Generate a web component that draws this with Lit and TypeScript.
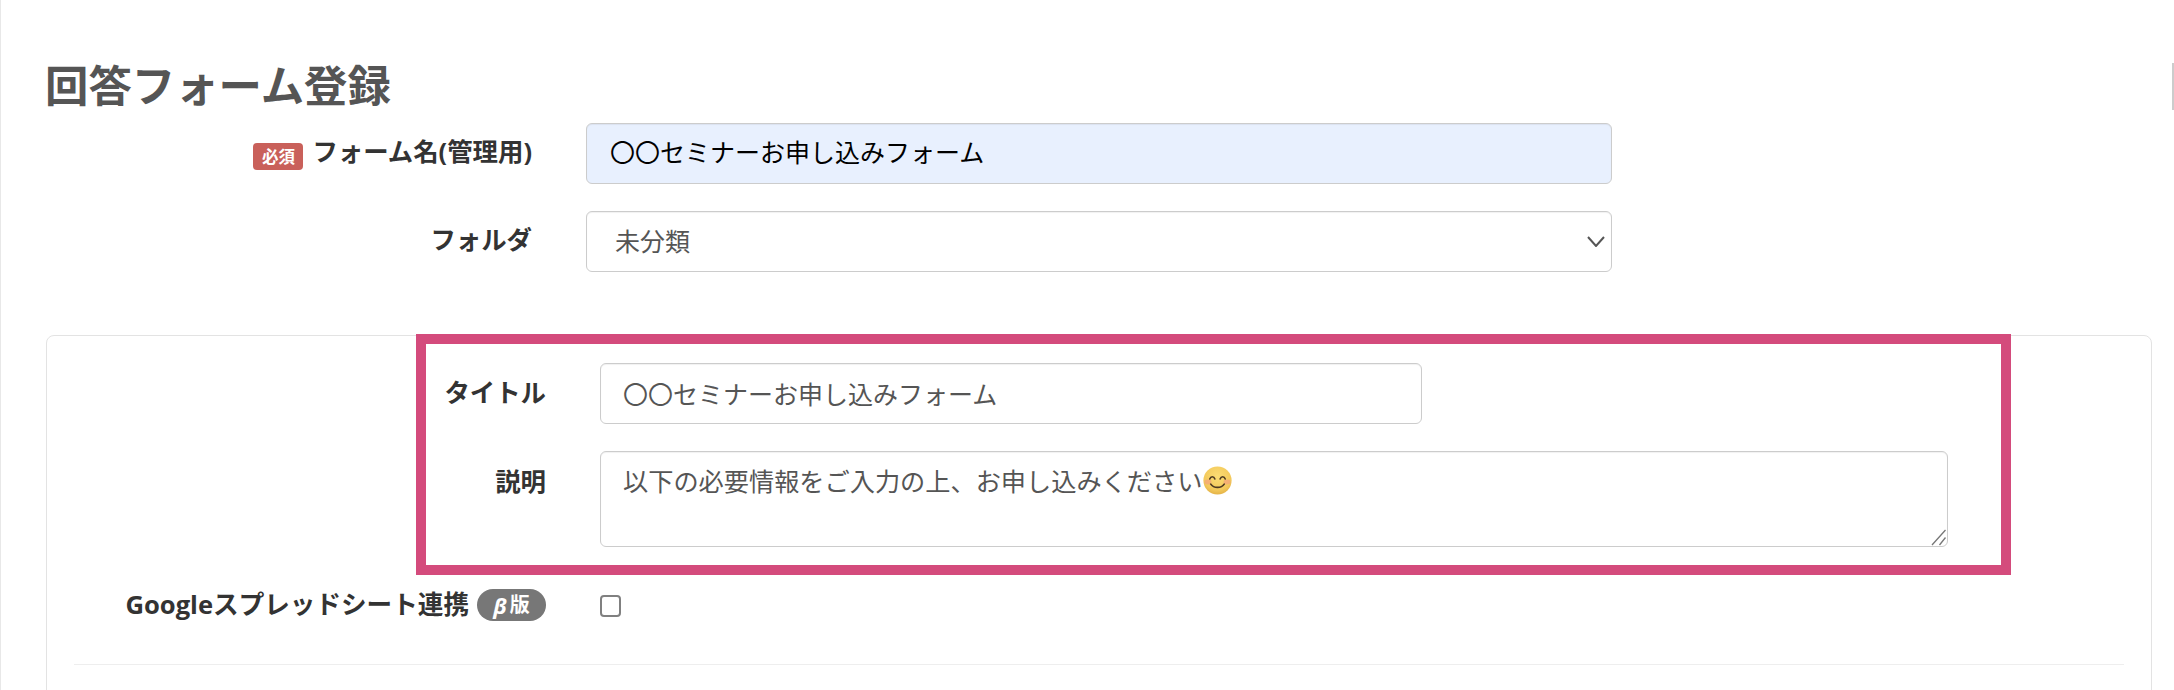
import { LitElement, html, css } from "lit";
import { customElement } from "lit/decorators.js";

@customElement("app-root")
export class AppRoot extends LitElement {
  static styles = css`
    :host {
      display: block;
      position: relative;
      width: 2174px;
      height: 690px;
      overflow: hidden;
      background: #fff;
      color: #333;
      font-family: "Open Sans", "Noto Sans CJK JP", sans-serif;
      font-size: 25px;
    }
    .page {
      box-sizing: border-box;
      height: 690px;
      border-left: 1px solid #e8e8e8;
      padding: 56px 22px 0 45px;
    }
    h1 {
      margin: 0 0 7px -1px;
      font-size: 43.4px;
      line-height: 60px;
      font-weight: 700;
      color: #555;
    }
    .rows {
      display: grid;
      grid-template-columns: 486px 1026px;
      column-gap: 54px;
      row-gap: 27px;
    }
    .label {
      display: flex;
      justify-content: flex-end;
      align-items: center;
      gap: 9px;
      font-size: 25.4px;
      font-weight: 700;
      color: #333;
      white-space: nowrap;
      line-height: 36px;
    }
    .lift {
      padding-bottom: 5px;
    }
    .lift-s {
      padding-bottom: 3px;
    }
    .wide {
      font-size: 25.6px;
      gap: 8px;
    }
    .badge {
      display: flex;
      align-items: center;
      justify-content: center;
      width: 50px;
      height: 27px;
      margin-top: 11px;
      border-radius: 4px;
      background: #c9605a;
      color: #fff;
      font-size: 16.5px;
      line-height: 27px;
    }
    .field {
      box-sizing: border-box;
      height: 61px;
      display: flex;
      align-items: center;
      border: 1px solid #ccc;
      border-radius: 6px;
      box-shadow: inset 0 1px 1px rgba(0, 0, 0, 0.06);
      padding: 0 22px;
      color: #555;
      white-space: nowrap;
    }
    .up-6 {
      padding-bottom: 6px;
    }
    .up-4 {
      padding-bottom: 4px;
    }
    .up-2 {
      padding-bottom: 2px;
    }
    .auto {
      background: #e8f0fe;
      color: #000;
      padding-left: 23px;
    }
    .select {
      position: relative;
      padding-left: 28px;
      justify-content: space-between;
      padding-right: 6px;
    }
    .chev {
      width: 18px;
      height: 11px;
      fill: none;
      stroke: #555;
      stroke-width: 2;
    }
    .card {
      box-sizing: border-box;
      margin-top: 63px;
      width: 2106px;
      height: 420px;
      border: 1px solid #e3e3e3;
      border-radius: 8px;
      padding: 27px;
    }
    .card .rows {
      grid-template-columns: 472px 1348px;
      column-gap: 54px;
    }
    .title {
      width: 822px;
    }
    .area {
      position: relative;
      height: 96px;
      align-items: flex-start;
      padding-top: 11px;
      line-height: 36px;
      font-size: 25.2px;
    }
    .area-label {
      align-items: flex-start;
      padding-top: 12px;
    }
    .emoji {
      width: 29px;
      height: 29px;
      margin: 3px 0 0 1px;
      flex: none;
    }
    .grip {
      position: absolute;
      right: 0;
      bottom: 0;
      width: 17px;
      height: 18px;
      fill: none;
      stroke: #777;
      stroke-width: 1.3;
    }
    .check-row {
      height: 61px;
      display: flex;
      align-items: center;
    }
    .pill {
      display: flex;
      align-items: center;
      justify-content: center;
      gap: 3px;
      width: 69px;
      height: 32px;
      border-radius: 16px;
      background: #777;
      color: #fff;
      font-size: 20px;
      line-height: 32px;
    }
    .beta {
      font-style: italic;
      font-size: 22px;
    }
    .check {
      appearance: none;
      box-sizing: border-box;
      width: 21px;
      height: 22px;
      margin: 2px 0 0;
      border: 2px solid #808080;
      border-radius: 4px;
      background: #fff;
    }
    hr {
      margin: 29px 0 0;
      border: 0;
      border-top: 1px solid #eee;
    }
    .mark {
      position: absolute;
      left: 416px;
      top: 334px;
      box-sizing: border-box;
      width: 1595px;
      height: 241px;
      border: 10px solid #d44b7c;
    }
    .edge {
      position: absolute;
      right: 0;
      top: 63px;
      width: 2px;
      height: 47px;
      background: #ccc;
    }
  `;

  render() {
    return html`
      <div class="page">
        <h1>回答フォーム登録</h1>
        <div class="rows">
          <div class="label lift"><span class="badge">必須</span><span>フォーム名(管理用)</span></div>
          <div class="field auto"><span class="up-6">〇〇セミナーお申し込みフォーム</span></div>
          <div class="label lift">フォルダ</div>
          <div class="field select">
            <span class="up-4">未分類</span>
            <svg class="chev" viewBox="0 0 18 11"><path d="M1 1l8 9 8-9" /></svg>
          </div>
        </div>
        <div class="card">
          <div class="rows">
            <div class="label lift-s">タイトル</div>
            <div class="field title"><span class="up-2">〇〇セミナーお申し込みフォーム</span></div>
            <div class="label area-label">説明</div>
            <div class="field area">
              <span>以下の必要情報をご入力の上、お申し込みください</span>
              <svg class="emoji" viewBox="0 0 28 28">
                <defs>
                  <radialGradient id="g" cx="50%" cy="35%" r="65%">
                    <stop offset="0%" stop-color="#fbdc74" />
                    <stop offset="75%" stop-color="#f3c95b" />
                    <stop offset="100%" stop-color="#e4b347" />
                  </radialGradient>
                </defs>
                <circle cx="14" cy="14" r="13.6" fill="url(#g)" />
                <ellipse cx="4.8" cy="15.5" rx="3.4" ry="2.4" fill="#f3a27c" opacity=".7" />
                <ellipse cx="23.2" cy="15.5" rx="3.4" ry="2.4" fill="#f3a27c" opacity=".7" />
                <path d="M6.5 12.5c1-2.8 4-2.8 5 0M16.5 12.5c1-2.8 4-2.8 5 0" fill="none" stroke="#4f3b22" stroke-width="1.5" stroke-linecap="round" />
                <path d="M7.5 17.5c2.8 4.2 10.2 4.2 13 0" fill="none" stroke="#4f3b22" stroke-width="1.7" stroke-linecap="round" />
              </svg>
              <svg class="grip" viewBox="0 0 17 18"><path d="M2 17L15.5 2M9.5 17L15.5 9.5" /></svg>
            </div>
            <div class="label wide">
              <span>Googleスプレッドシート連携</span>
              <span class="pill"><span class="beta">β</span><span>版</span></span>
            </div>
            <div class="check-row"><input class="check" type="checkbox" /></div>
          </div>
          <hr />
        </div>
      </div>
      <div class="mark"></div>
      <div class="edge"></div>
    `;
  }
}
